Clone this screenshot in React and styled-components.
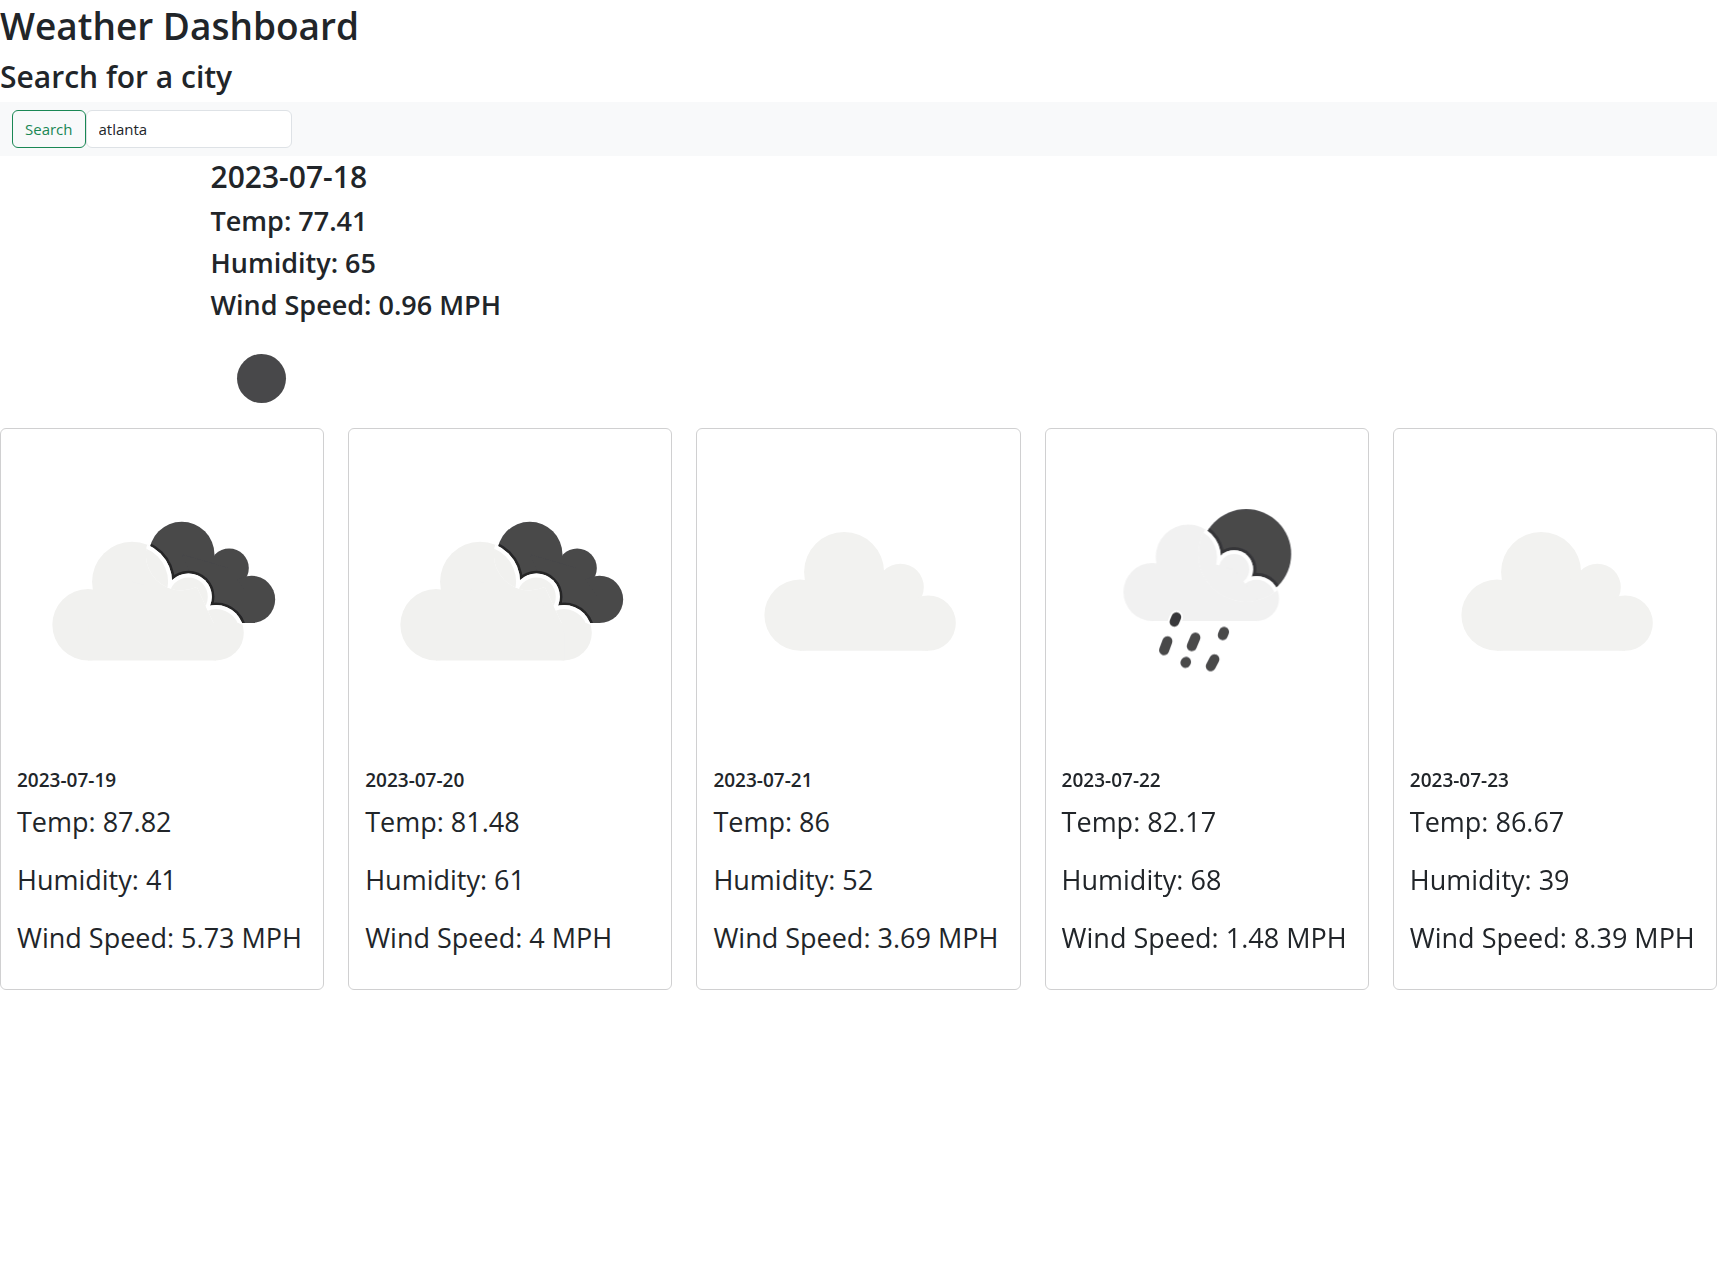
import React, { useState } from "react";
import styled, { createGlobalStyle } from "styled-components";

const GlobalStyle = createGlobalStyle`
  *, *::before, *::after { box-sizing: border-box; }
  body {
    margin: 0;
    background: #fff;
    color: #212529;
    font-family: "Segoe UI", "Open Sans", "Noto Sans", sans-serif;
    font-size: 16px;
    line-height: 24px;
  }
`;

const Page = styled.div`
  padding-right: 12px;
`;

const Title = styled.h1`
  margin: 0 0 4px;
  font-size: 37px;
  font-weight: 600;
  line-height: 52px;
`;

const Subtitle = styled.h2`
  margin: 0 0 4px;
  font-size: 30px;
  font-weight: 600;
  line-height: 42px;
`;

const SearchBar = styled.form`
  display: flex;
  padding: 8px 12px;
  background: #f8f9fa;
`;

const SearchButton = styled.button`
  height: 38px;
  padding: 6px 12px;
  border: 1px solid #198754;
  border-radius: 6px;
  background: transparent;
  color: #198754;
  font: inherit;
  font-size: 15px;
  cursor: pointer;
`;

const SearchInput = styled.input`
  width: 206px;
  height: 38px;
  padding: 6px 12px;
  border: 1px solid #dee2e6;
  border-radius: 6px;
  background: #fff;
  color: #212529;
  font: inherit;
  font-size: 15px;
`;

const Current = styled.section`
  max-width: 1320px;
  margin: 0 auto;
  padding: 0 12px;
`;

const CurrentStat = styled.h3`
  margin: 0 0 4px;
  font-size: 27px;
  font-weight: 600;
  line-height: 38px;
`;

const CurrentIcon = styled.svg`
  display: block;
  width: 100px;
  height: 100px;
`;

const Forecast = styled.section`
  display: grid;
  grid-template-columns: repeat(5, minmax(0, 1fr));
  gap: 24px;
`;

const Card = styled.article`
  border: 1px solid #d0d0d1;
  border-radius: 6px;
  background: #fff;
`;

const CardIcon = styled.svg`
  display: block;
  width: 100%;
  aspect-ratio: 1;
`;

const CardBody = styled.div`
  padding: 16px;
`;

const CardDate = styled.h5`
  margin: 0 0 6px;
  font-size: 19px;
  font-weight: 600;
  line-height: 26px;
`;

const CardStat = styled.p`
  margin: 0 0 12px;
  font-size: 27px;
  line-height: 46px;
`;

const DARK = "#48484a";
const SHADE = "#262628";

/* Cloud outline built from four lobes; inset shrinks every lobe evenly. */
function CloudShape({ inset = 0, ...rest }) {
  return (
    <g {...rest}>
      <circle cx="463" cy="456" r={120 - inset} />
      <circle cx="632" cy="501" r={70 - inset} />
      <circle cx="715" cy="609" r={83 - inset} />
      <circle cx="331" cy="585" r={107 - inset} />
      <path d={`M331 ${692 - inset}H715V609L632 501L463 456L331 585Z`} />
    </g>
  );
}

function Soften({ id }) {
  return (
    <filter id={id} x="-5%" y="-5%" width="110%" height="110%">
      <feGaussianBlur stdDeviation="2" />
    </filter>
  );
}

function BackCloud({ grow = 0 }) {
  return (
    <>
      <circle cx="545" cy="403" r={98 + grow} />
      <circle cx="687" cy="444" r={59 + grow} />
      <circle cx="754" cy="538" r={71 + grow} />
      <path d="M545 403L687 444L754 538V609H640Z" />
    </>
  );
}

function BrokenClouds({ id }) {
  const move = "translate(-67 29)";
  return (
    <CardIcon viewBox="3 27 966 966" role="img" aria-label="Broken clouds">
      <defs>
        <Soften id={`${id}-soft`} />
        <clipPath id={`${id}-back`}><BackCloud /></clipPath>
        <clipPath id={`${id}-near`}><BackCloud grow={10} /></clipPath>
      </defs>
      <g filter={`url(#${id}-soft)`}>
        <g fill={DARK}><BackCloud /></g>
        <g clipPath={`url(#${id}-back)`}>
          <CloudShape transform={move} fill={SHADE} stroke={SHADE} strokeWidth="16" />
        </g>
        <CloudShape transform={move} fill="#f1f1ef" />
        <g clipPath={`url(#${id}-near)`}>
          <CloudShape transform={move} fill="#fff" />
          <CloudShape transform={move} inset={12} fill="#f1f1ef" />
        </g>
      </g>
    </CardIcon>
  );
}

function ScatteredClouds({ id }) {
  return (
    <CardIcon viewBox="22 27 966 966" role="img" aria-label="Scattered clouds">
      <defs><Soften id={`${id}-soft`} /></defs>
      <g filter={`url(#${id}-soft)`}>
        <CloudShape fill="#f2f2f0" />
      </g>
    </CardIcon>
  );
}

function Rain({ id }) {
  const move = "translate(67 40) scale(.813)";
  return (
    <CardIcon viewBox="17 27 966 966" role="img" aria-label="Rain">
      <defs>
        <Soften id={`${id}-soft`} />
        <clipPath id={`${id}-moon`}><circle cx="617" cy="402" r="135" /></clipPath>
        <clipPath id={`${id}-near`}><circle cx="617" cy="402" r="143" /></clipPath>
      </defs>
      <g filter={`url(#${id}-soft)`}>
        <circle cx="617" cy="402" r="135" fill={DARK} />
        <g clipPath={`url(#${id}-moon)`}>
          <CloudShape transform={move} fill="#363638" stroke="#363638" strokeWidth="24" />
        </g>
        <CloudShape transform={move} fill="#f1f1f1" />
        <g clipPath={`url(#${id}-near)`}>
          <CloudShape transform={move} fill="#fff" />
          <CloudShape transform={move} inset={14} fill="#f1f1f1" />
        </g>
        <g fill="none" strokeLinecap="round">
          <path d="M408 591L402 605" stroke="#fff" strokeWidth="40" />
          <path d="M408 591L402 605" stroke="#38383a" strokeWidth="29" />
          <path d="M381 663L371 690M465 652L454 678M551 635L547 645M437 725L435 728M522 717L511 738" stroke={DARK} strokeWidth="30" />
        </g>
      </g>
    </CardIcon>
  );
}

const days = [
  { date: "2023-07-19", Icon: BrokenClouds, temp: "87.82", humidity: 41, wind: "5.73" },
  { date: "2023-07-20", Icon: BrokenClouds, temp: "81.48", humidity: 61, wind: "4" },
  { date: "2023-07-21", Icon: ScatteredClouds, temp: "86", humidity: 52, wind: "3.69" },
  { date: "2023-07-22", Icon: Rain, temp: "82.17", humidity: 68, wind: "1.48" },
  { date: "2023-07-23", Icon: ScatteredClouds, temp: "86.67", humidity: 39, wind: "8.39" },
];

export default function App() {
  const [city, setCity] = useState("atlanta");
  return (
    <Page>
      <GlobalStyle />
      <Title>Weather Dashboard</Title>
      <Subtitle>
        <label htmlFor="city">Search for a city</label>
      </Subtitle>
      <SearchBar onSubmit={(event) => event.preventDefault()}>
        <SearchButton type="submit">Search</SearchButton>
        <SearchInput id="city" type="text" value={city} onChange={(event) => setCity(event.target.value)} />
      </SearchBar>
      <Current>
        <Subtitle>2023-07-18</Subtitle>
        <CurrentStat>Temp: 77.41</CurrentStat>
        <CurrentStat>Humidity: 65</CurrentStat>
        <CurrentStat>Wind Speed: 0.96 MPH</CurrentStat>
        <CurrentIcon viewBox="0 0 100 100" role="img" aria-label="Clear night">
          <circle cx="50.5" cy="50.5" r="24.5" fill={DARK} />
        </CurrentIcon>
      </Current>
      <Forecast>
        {days.map(({ date, Icon, temp, humidity, wind }) => (
          <Card key={date}>
            <Icon id={`icon-${date}`} />
            <CardBody>
              <CardDate>{date}</CardDate>
              <CardStat>Temp: {temp}</CardStat>
              <CardStat>Humidity: {humidity}</CardStat>
              <CardStat>Wind Speed: {wind} MPH</CardStat>
            </CardBody>
          </Card>
        ))}
      </Forecast>
    </Page>
  );
}
